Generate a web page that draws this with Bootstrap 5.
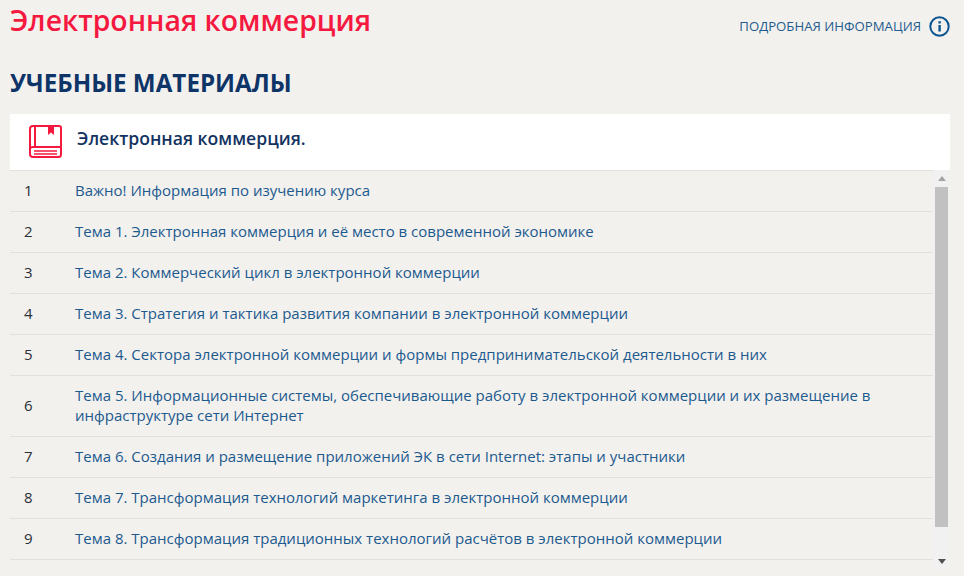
<!DOCTYPE html>
<html lang="ru">

<head>
    <meta charset="UTF-8">
    <meta name="viewport" content="width=device-width, initial-scale=1">
    <title>Учебные материалы</title>
    <link href="https://cdn.jsdelivr.net/npm/bootstrap@5.3.0/dist/css/bootstrap.min.css" rel="stylesheet">
    <style>
        html, body { height: 100%; overflow: hidden; }
        body { background: #f3f1ee; font-family: "Open Sans", sans-serif; font-size: 15px; color: #333; }
        .page_wrap { padding: 0 14px 0 10px; }
        .course_title { font-family: "Open Sans", sans-serif; font-size: 28.4px; font-weight: 600; line-height: 36px; color: #f5193f; margin: 2px 0 0; }
        .info_link { font-size: 13.2px; color: #1f5c8f; text-decoration: none; margin-top: 16px; }
        .info_link svg { margin-left: 8px; }
        .section_title { font-family: "Open Sans", sans-serif; font-size: 24.2px; font-weight: 700; line-height: 32px; color: #0e3468; margin: 29px 0 15px; }
        .book_head { background: #fff; height: 56px; padding-left: 19px; }
        .book_head h2 { font-size: 17.6px; font-weight: 600; color: #12335f; margin: 0 0 6px 15px; }
        .book_head svg { margin-bottom: 1px; }
        .lesson_area { height: 400px; }
        .lesson_row { border-top: 1px solid #e2e0dd; padding: 9px 0 11px; line-height: 20px; }
        .lesson_row:last-child { border-bottom: 1px solid #e2e0dd; }
        .lesson_num { width: 65px; padding-left: 14px; flex-shrink: 0; color: #2a2f38; }
        .lesson_row a { color: #1c5a8e; text-decoration: none; }
        .scroll_bar { width: 17px; flex-shrink: 0; background: #f1f1f1; }
        .scroll_btn { height: 17px; flex-shrink: 0; }
        .scroll_thumb { height: 340px; margin: 0 2px; background: #c1c1c1; }
    </style>
</head>

<body>
    <div class="page_wrap">
        <div class="d-flex justify-content-between align-items-start">
            <h1 class="course_title">Электронная коммерция</h1>
            <a href="#" class="info_link d-flex align-items-center">ПОДРОБНАЯ ИНФОРМАЦИЯ
                <svg width="21" height="21" viewBox="0 0 21 21">
                    <circle cx="10.5" cy="10.5" r="9.2" fill="none" stroke="#0b5591" stroke-width="2"/>
                    <rect x="9.4" y="9" width="2.4" height="6.5" fill="#0b5591"/>
                    <rect x="9.4" y="5.2" width="2.4" height="2.3" fill="#0b5591"/>
                </svg>
            </a>
        </div>
        <h2 class="section_title">УЧЕБНЫЕ МАТЕРИАЛЫ</h2>
        <div class="book_head d-flex align-items-center">
            <svg width="33" height="33" viewBox="0 0 33 33" fill="none" stroke="#f5193f" stroke-width="2">
                <path d="M6 1H30Q32 1 32 3V29Q32 32 30 32H4Q1 32 1 29V4Q1 1 4 1H6V22" />
                <path d="M1 24Q1 22 4 22H32" />
                <path d="M5 26H28M5 29H28" stroke-width="1.5"/>
                <path d="M19 1V10L22 7.5L25 10V1z" fill="#f5193f" stroke="none"/>
            </svg>
            <h2>Электронная коммерция.</h2>
        </div>
        <div class="lesson_area d-flex">
            <div class="flex-grow-1 overflow-hidden" id="lesson_list"></div>
            <div class="scroll_bar d-flex flex-column">
                <div class="scroll_btn d-flex align-items-center justify-content-center">
                    <svg width="8" height="5"><path d="M0 5L4 0L8 5z" fill="#a3a3a3"/></svg>
                </div>
                <div class="scroll_thumb"></div>
                <div class="flex-grow-1"></div>
                <div class="scroll_btn d-flex align-items-center justify-content-center">
                    <svg width="8" height="5"><path d="M0 0L8 0L4 5z" fill="#505050"/></svg>
                </div>
            </div>
        </div>
    </div>

    <script src="https://cdn.jsdelivr.net/npm/bootstrap@5.3.0/dist/js/bootstrap.bundle.min.js"></script>
    <script>
        const lessons = [
            "Важно! Информация по изучению курса",
            "Тема 1. Электронная коммерция и её место в современной экономике",
            "Тема 2. Коммерческий цикл в электронной коммерции",
            "Тема 3. Стратегия и тактика развития компании в электронной коммерции",
            "Тема 4. Сектора электронной коммерции и формы предпринимательской деятельности в них",
            "Тема 5. Информационные системы, обеспечивающие работу в электронной коммерции и их размещение в инфраструктуре сети Интернет",
            "Тема 6. Создания и размещение приложений ЭК в сети Internet: этапы и участники",
            "Тема 7. Трансформация технологий маркетинга в электронной коммерции",
            "Тема 8. Трансформация традиционных технологий расчётов в электронной коммерции"
        ];
        const list = document.getElementById("lesson_list");
        lessons.forEach((text, i) => {
            let row = document.createElement("div");
            row.className = "lesson_row d-flex align-items-center";
            row.innerHTML = '<div class="lesson_num">' + (i + 1) + '</div><a href="#">' + text + '</a>';
            list.appendChild(row);
        });
    </script>
</body>

</html>
